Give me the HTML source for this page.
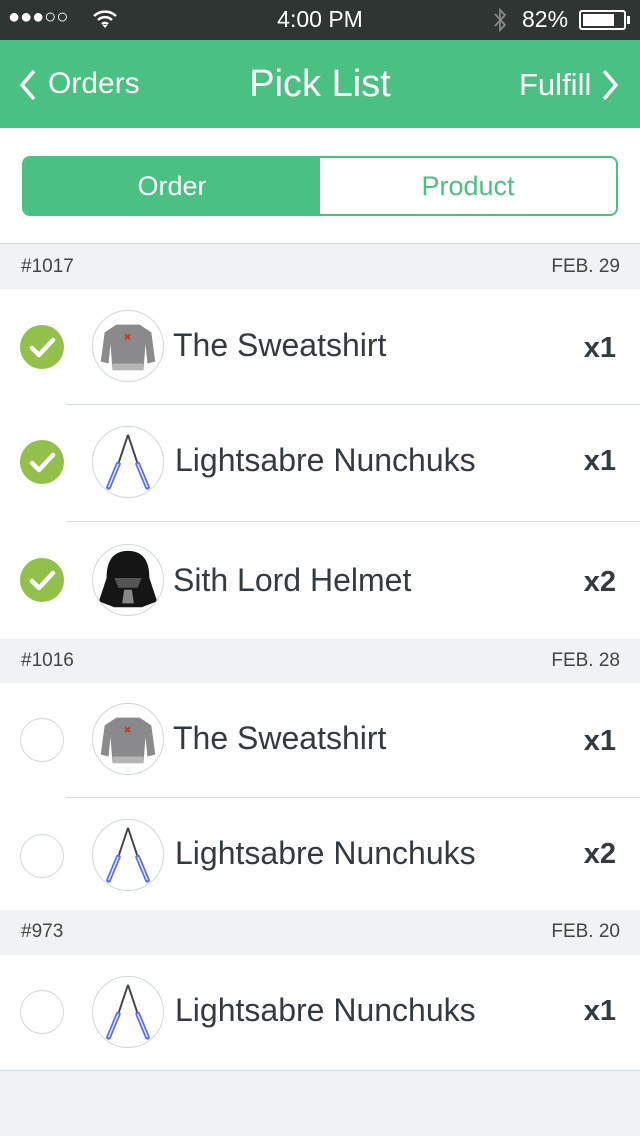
<!DOCTYPE html>
<html><head><meta charset="utf-8"><style>
*{margin:0;padding:0;box-sizing:border-box}
body{width:640px;height:1136px;background:#f1f2f4;font-family:"Liberation Sans",sans-serif;position:relative;overflow:hidden}
.sb{position:absolute;top:0;left:0;width:640px;height:40px;background:#2e3532;color:#fff}
.nav{position:absolute;top:40px;left:0;width:640px;height:88px;background:#4ac083;color:#fff}
.seg{position:absolute;top:128px;left:0;width:640px;height:116px;background:#fff;border-bottom:1px solid #d8dde2}
.seg .box{position:absolute;left:22px;top:28px;width:596px;height:60px;border:2px solid #4ac083;border-radius:8px;overflow:hidden;display:flex}
.seg .box div{flex:1;text-align:center;line-height:56px;font-size:27px}
.hdr{position:absolute;left:0;width:640px;height:44px;background:#f1f2f3;color:#444;font-size:19px;line-height:44px;padding:0 20px 0 21px;display:flex;justify-content:space-between}
.row{position:absolute;left:0;width:640px;background:#fff}
.row .sep{position:absolute;left:66px;right:0;bottom:0;height:1px;background:#d5dce2}
.chk{position:absolute;left:20px;width:44px;height:44px;border-radius:50%}
.chk.on{background:#93c04a}
.chk.off{border:1.5px solid #cfd8df}
.img{position:absolute;left:92px;width:72px;height:72px;border-radius:50%;border:1px solid #cfd8df;background:#fff;overflow:hidden}
.name{position:absolute;left:173px;font-size:32px;color:#333a40}
.qty{position:absolute;right:24px;font-size:29px;font-weight:bold;color:#333a40}
</style></head><body>
<div class="sb">
<div style="position:absolute;left:8px;top:6px;font-size:20px;letter-spacing:0px">●●●○○</div>
<svg style="position:absolute;left:92px;top:9px" width="26" height="20" viewBox="0 0 26 20"><path d="M2 7 A16 16 0 0 1 24 7 M6 11 A10 10 0 0 1 20 11 M10 15 A4.5 4.5 0 0 1 16 15" stroke="#fff" stroke-width="2.5" fill="none"/><path d="M13 19 L10.5 16 L15.5 16Z" fill="#fff"/></svg>
<div style="position:absolute;left:0;width:640px;text-align:center;top:6px;font-size:23px">4:00 PM</div>
<svg style="position:absolute;left:492px;top:7px" width="16" height="26" viewBox="0 0 16 26"><path d="M3 7 L13 18 L8 23 L8 3 L13 8 L3 19" stroke="#888" stroke-width="1.8" fill="none"/></svg>
<div style="position:absolute;left:522px;top:6px;font-size:23px">82%</div>
<div style="position:absolute;left:579px;top:10px;width:47px;height:20px;border:2px solid #fff;border-radius:3px;padding:2px"><div style="width:80%;height:100%;background:#fff"></div></div>
<div style="position:absolute;left:627px;top:16px;width:3px;height:8px;background:#fff"></div>
</div>
<div class="nav">
<svg style="position:absolute;left:18px;top:28px" width="20" height="34" viewBox="0 0 20 34"><path d="M16 3 L4 17 L16 31" stroke="#fff" stroke-width="3.5" fill="none"/></svg>
<div style="position:absolute;left:48px;top:27px;font-size:30px">Orders</div>
<div style="position:absolute;left:0;width:640px;text-align:center;top:23px;font-size:38px">Pick List</div>
<div style="position:absolute;left:519px;top:27px;font-size:31px">Fulfill</div>
<svg style="position:absolute;left:600px;top:28px" width="20" height="34" viewBox="0 0 20 34"><path d="M4 3 L16 17 L4 31" stroke="#fff" stroke-width="3.5" fill="none"/></svg>
</div>
<div class="seg"><div class="box"><div style="background:#4ac083;color:#fff">Order</div><div style="color:#4ac083">Product</div></div></div>

<div class="hdr" style="top:245px"><span>#1017</span><span>FEB. 29</span></div>
<div class="hdr" style="top:639px"><span>#1016</span><span>FEB. 28</span></div>
<div class="hdr" style="top:910px"><span>#973</span><span>FEB. 20</span></div>

<svg width="0" height="0" style="position:absolute"><defs>
<symbol id="sw" viewBox="0 0 72 72"><path d="M24 14 L48 14 L60 22 L64 52 L56 54 L54 34 L52 60 L20 60 L18 34 L16 54 L8 52 L12 22Z" fill="#8a8a8c"/><rect x="20" y="54" width="32" height="7" fill="#b5b5b5"/><path d="M33 24 l5 5 M38 24 l-5 5" stroke="#c33" stroke-width="2"/></symbol>
<symbol id="nc" viewBox="0 0 72 72"><path d="M36 8 L26 38 M36 8 L46 38" stroke="#444" stroke-width="2" fill="none"/><path d="M26 38 L16 62 M46 38 L56 62" stroke="#5b6df0" stroke-width="5" stroke-linecap="round"/><path d="M26 38 L16 62 M46 38 L56 62" stroke="#e6e9ff" stroke-width="1.5"/></symbol>
<symbol id="hm" viewBox="0 0 72 72"><path d="M36 6 C18 6 14 20 14 34 L6 58 L22 64 L50 64 L66 58 L58 34 C58 20 54 6 36 6Z" fill="#151515"/><path d="M22 34 L50 34 L46 44 L26 44Z" fill="#555"/><path d="M32 46 L40 46 L42 60 L30 60Z" fill="#888"/></symbol>
<symbol id="ck" viewBox="0 0 44 44"><path d="M12 23 L19 30 L33 15" stroke="#fff" stroke-width="4.5" fill="none" stroke-linecap="round" stroke-linejoin="round"/></symbol>
</defs></svg>

<div class="row" style="top:289px;height:116px"><div class="chk on" style="top:36px"><svg width="44" height="44"><use href="#ck"/></svg></div><div class="img" style="top:21px"><svg width="70" height="70"><use href="#sw"/></svg></div><div class="name" style="top:38px">The Sweatshirt</div><div class="qty" style="top:43px">x1</div><div class="sep"></div></div>
<div class="row" style="top:405px;height:117px"><div class="chk on" style="top:35px"><svg width="44" height="44"><use href="#ck"/></svg></div><div class="img" style="top:21px"><svg width="70" height="70"><use href="#nc"/></svg></div><div class="name" style="top:37px;left:175px">Lightsabre Nunchuks</div><div class="qty" style="top:40px">x1</div><div class="sep"></div></div>
<div class="row" style="top:522px;height:117px"><div class="chk on" style="top:36px"><svg width="44" height="44"><use href="#ck"/></svg></div><div class="img" style="top:22px"><svg width="70" height="70"><use href="#hm"/></svg></div><div class="name" style="top:40px">Sith Lord Helmet</div><div class="qty" style="top:44px">x2</div></div>

<div class="row" style="top:683px;height:115px"><div class="chk off" style="top:35px"></div><div class="img" style="top:20px"><svg width="70" height="70"><use href="#sw"/></svg></div><div class="name" style="top:37px">The Sweatshirt</div><div class="qty" style="top:42px">x1</div><div class="sep"></div></div>
<div class="row" style="top:798px;height:112px"><div class="chk off" style="top:36px"></div><div class="img" style="top:21px"><svg width="70" height="70"><use href="#nc"/></svg></div><div class="name" style="top:37px;left:175px">Lightsabre Nunchuks</div><div class="qty" style="top:40px">x2</div></div>

<div class="row" style="top:955px;height:116px;border-bottom:1px solid #d5dce2"><div class="chk off" style="top:35px"></div><div class="img" style="top:21px"><svg width="70" height="70"><use href="#nc"/></svg></div><div class="name" style="top:37px;left:175px">Lightsabre Nunchuks</div><div class="qty" style="top:40px">x1</div></div>
</body></html>
